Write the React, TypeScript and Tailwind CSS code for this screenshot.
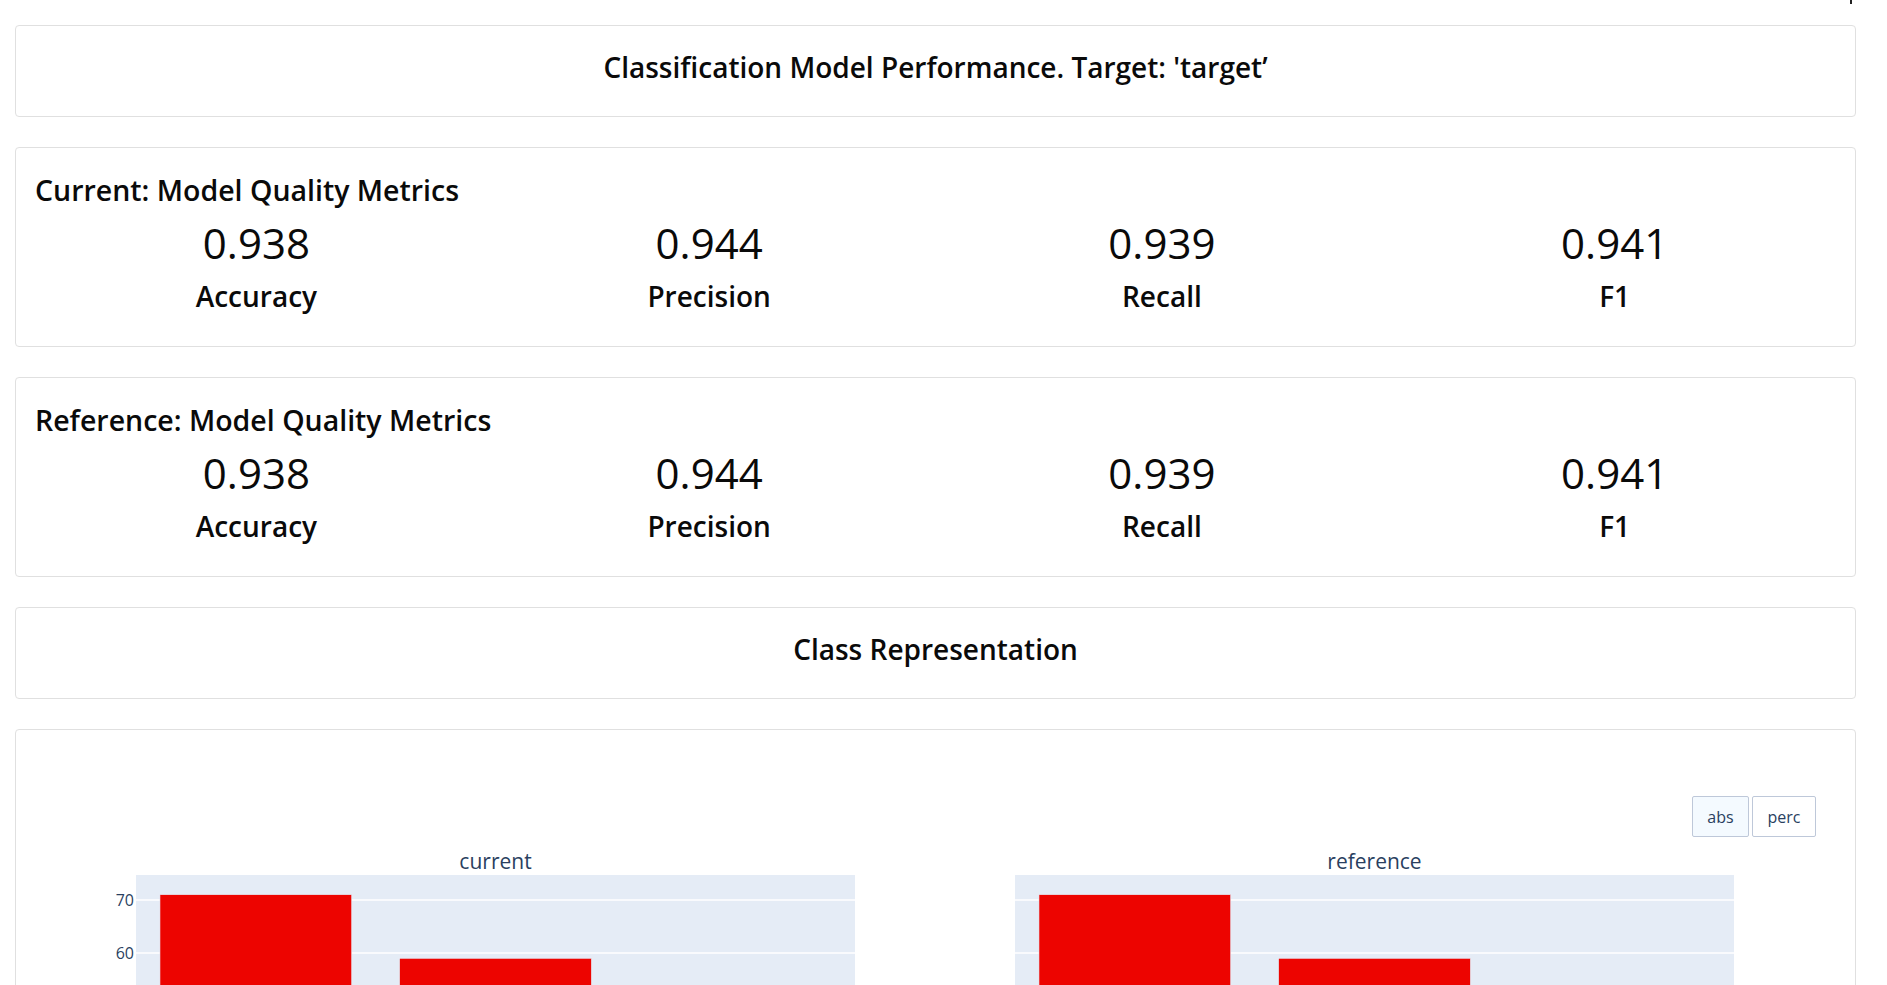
import React from "react";

const metrics = [
  { v: "0.938", l: "Accuracy" },
  { v: "0.944", l: "Precision" },
  { v: "0.939", l: "Recall" },
  { v: "0.941", l: "F1" },
];

function MetricsCard({ title }: { title: string }) {
  return (
    <div className="border border-[#e0e0e0] rounded-[4px] bg-white pt-[24px] pb-[32px] px-[14px]">
      <div className="text-[28.5px] leading-[36px] font-semibold pl-[5px] text-[#0a0a0a]">{title}</div>
      <div className="grid grid-cols-4 mt-[11px]">
        {metrics.map((m) => (
          <div key={m.l} className="flex flex-col items-center">
            <div className="text-[42px] leading-[48px] font-medium text-[#0a0a0a]">{m.v}</div>
            <div className="mt-[11px] text-[28px] leading-[36px] font-semibold text-[#0a0a0a]">{m.l}</div>
          </div>
        ))}
      </div>
    </div>
  );
}

function TitleCard({ title }: { title: string }) {
  return (
    <div className="border border-[#e0e0e0] rounded-[4px] bg-white h-[92px] flex items-center justify-center pb-[8px]">
      <div className="text-[28px] leading-[36px] font-semibold text-[#0a0a0a]">{title}</div>
    </div>
  );
}

function Plot({ x0, title, values, showTicks }: { x0: number; title: string; values: number[]; showTicks: boolean }) {
  const w = 719;
  const base = 434;
  const k = 5.3;
  const cat = w / 3;
  return (
    <g>
      <text x={x0 + w / 2} y={32} textAnchor="middle" fontSize={21} fill="#2a3f5f" fontFamily="'Open Sans', sans-serif">
        {title}
      </text>
      <rect x={x0} y={38} width={w} height={base - 38} fill="#e5ecf6" />
      {[10, 20, 30, 40, 50, 60, 70].map((v) => (
        <line key={v} x1={x0} x2={x0 + w} y1={base - v * k} y2={base - v * k} stroke="#ffffff" strokeWidth={1.4} />
      ))}
      {showTicks &&
        [60, 70].map((v) => (
          <text key={v} x={x0 - 2} y={base - v * k + 6} textAnchor="end" fontSize={16} fill="#2a3f5f" fontFamily="'Open Sans', sans-serif">
            {v}
          </text>
        ))}
      {values.map((v, i) => (
        <rect
          key={i}
          x={x0 + i * cat + cat * 0.1}
          y={base - v * k}
          width={cat * 0.8}
          height={v * k}
          fill="#ed0400"
          stroke="#e5ecf6"
          strokeWidth={0.6}
        />
      ))}
    </g>
  );
}

export default function App() {
  return (
    <div className="w-full h-[985px] overflow-hidden bg-white font-['Open_Sans',sans-serif]">
      <div className="h-[25px] flex justify-end pr-[35px]">
        <div className="w-[2px] h-[4px] bg-[#222]" />
      </div>
      <div className="pl-[15px] pr-[31px] flex flex-col gap-[30px]">
        <TitleCard title="Classification Model Performance. Target: 'target’" />
        <MetricsCard title="Current: Model Quality Metrics" />
        <MetricsCard title="Reference: Model Quality Metrics" />
        <TitleCard title="Class Representation" />
        <div className="border border-[#e0e0e0] rounded-[4px] bg-white pt-[66px] h-[600px]">
          <div className="flex justify-end pr-[39px] gap-[3px]">
            <button className="w-[57px] h-[41px] border border-[#bec8d9] rounded-[2px] bg-[#f4faff] text-[16px] text-[#2a3f5f] leading-none">
              abs
            </button>
            <button className="w-[64px] h-[41px] border border-[#bec8d9] rounded-[2px] bg-white text-[16px] text-[#2a3f5f] leading-none">
              perc
            </button>
          </div>
          <svg width="1839" height="470" className="block">
            <Plot x0={120} title="current" values={[71, 59, 20]} showTicks={true} />
            <Plot x0={999} title="reference" values={[71, 59, 20]} showTicks={false} />
          </svg>
        </div>
      </div>
    </div>
  );
}
